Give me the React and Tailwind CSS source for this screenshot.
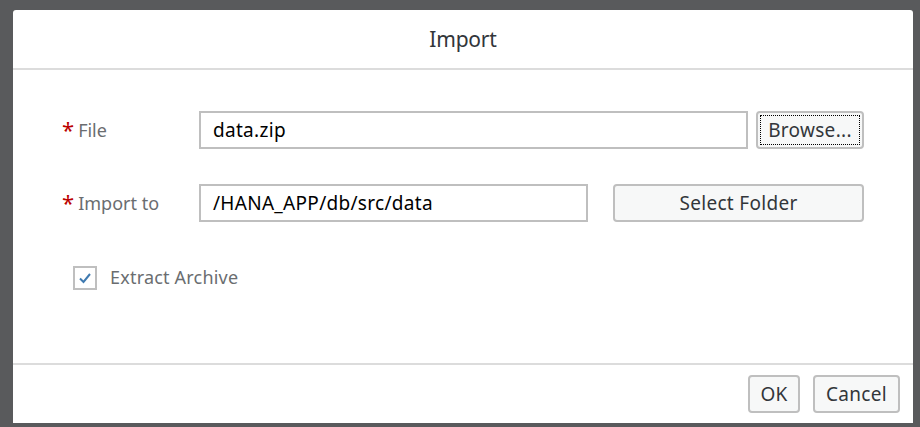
export default function App() {
  const font = { fontFamily: '"Noto Sans", "Open Sans", Arial, sans-serif' };
  return (
    <div className="w-[920px] h-[427px] bg-[#595a5c] pt-[10px] pl-[13px]" style={font}>
      <div className="w-[900px] h-[413px] bg-white rounded-t-[3px] flex flex-col">
        <div className="h-[60px] flex items-center justify-center text-[21px] tracking-[-0.2px] text-[#32363a] border-b-2 border-[#dcdcdc] pt-[2px]">
          Import
        </div>
        <div className="flex-1 flex flex-col pt-[41px] pl-[49px]">
          <div className="flex items-center h-[38px]">
            <div className="w-[137px] flex items-center text-[18px] text-[#6a6d70]">
              <span className="text-[#bb0000] text-[22px] leading-none mr-[4px] mt-[-2px]">*</span>File
            </div>
            <div className="w-[549px] h-[38px] border-2 border-[#bfbfbf] flex items-center px-[12px] text-[19px] tracking-[0.3px] text-black">
              data.zip
            </div>
            <div className="ml-[8px] w-[108px] h-[38px] border-2 border-[#bfbfbf] rounded-[4px] bg-[#f7f8f8] p-[2px]">
              <div className="w-full h-full border border-dotted border-black flex items-center justify-center text-[19px] tracking-[0.3px] text-[#32363a]">
                Browse...
              </div>
            </div>
          </div>
          <div className="flex items-center h-[38px] mt-[35px]">
            <div className="w-[137px] flex items-center text-[18px] text-[#6a6d70]">
              <span className="text-[#bb0000] text-[22px] leading-none mr-[4px] mt-[-2px]">*</span>Import to
            </div>
            <div className="w-[389px] h-[38px] border-2 border-[#bfbfbf] flex items-center px-[12px] text-[19px] tracking-[0.3px] text-black">
              /HANA_APP/db/src/data
            </div>
            <div className="ml-[25px] w-[251px] h-[38px] border-2 border-[#bfbfbf] rounded-[4px] bg-[#f7f8f8] flex items-center justify-center text-[19px] tracking-[0.3px] text-[#32363a]">
              Select Folder
            </div>
          </div>
          <div className="flex items-center mt-[42px] ml-[11px]">
            <div className="w-[24px] h-[24px] border-2 border-[#bfbfbf] flex items-center justify-center bg-white">
              <svg width="14" height="12" viewBox="0 0 14 12">
                <path d="M2 6.5 L5.5 10 L12 2" fill="none" stroke="#3f7ab0" strokeWidth="2" />
              </svg>
            </div>
            <span className="ml-[13px] text-[18px] tracking-[0.2px] text-[#6a6d70]">Extract Archive</span>
          </div>
        </div>
        <div className="h-[60px] border-t-2 border-[#dcdcdc] flex items-center justify-end pr-[13px] gap-[13px]">
          <div className="w-[52px] h-[38px] border-2 border-[#bfbfbf] rounded-[4px] bg-[#f7f8f8] flex items-center justify-center text-[19px] tracking-[0.3px] text-[#32363a]">
            OK
          </div>
          <div className="w-[87px] h-[38px] border-2 border-[#bfbfbf] rounded-[4px] bg-[#f7f8f8] flex items-center justify-center text-[19px] tracking-[0.3px] text-[#32363a]">
            Cancel
          </div>
        </div>
      </div>
    </div>
  );
}
